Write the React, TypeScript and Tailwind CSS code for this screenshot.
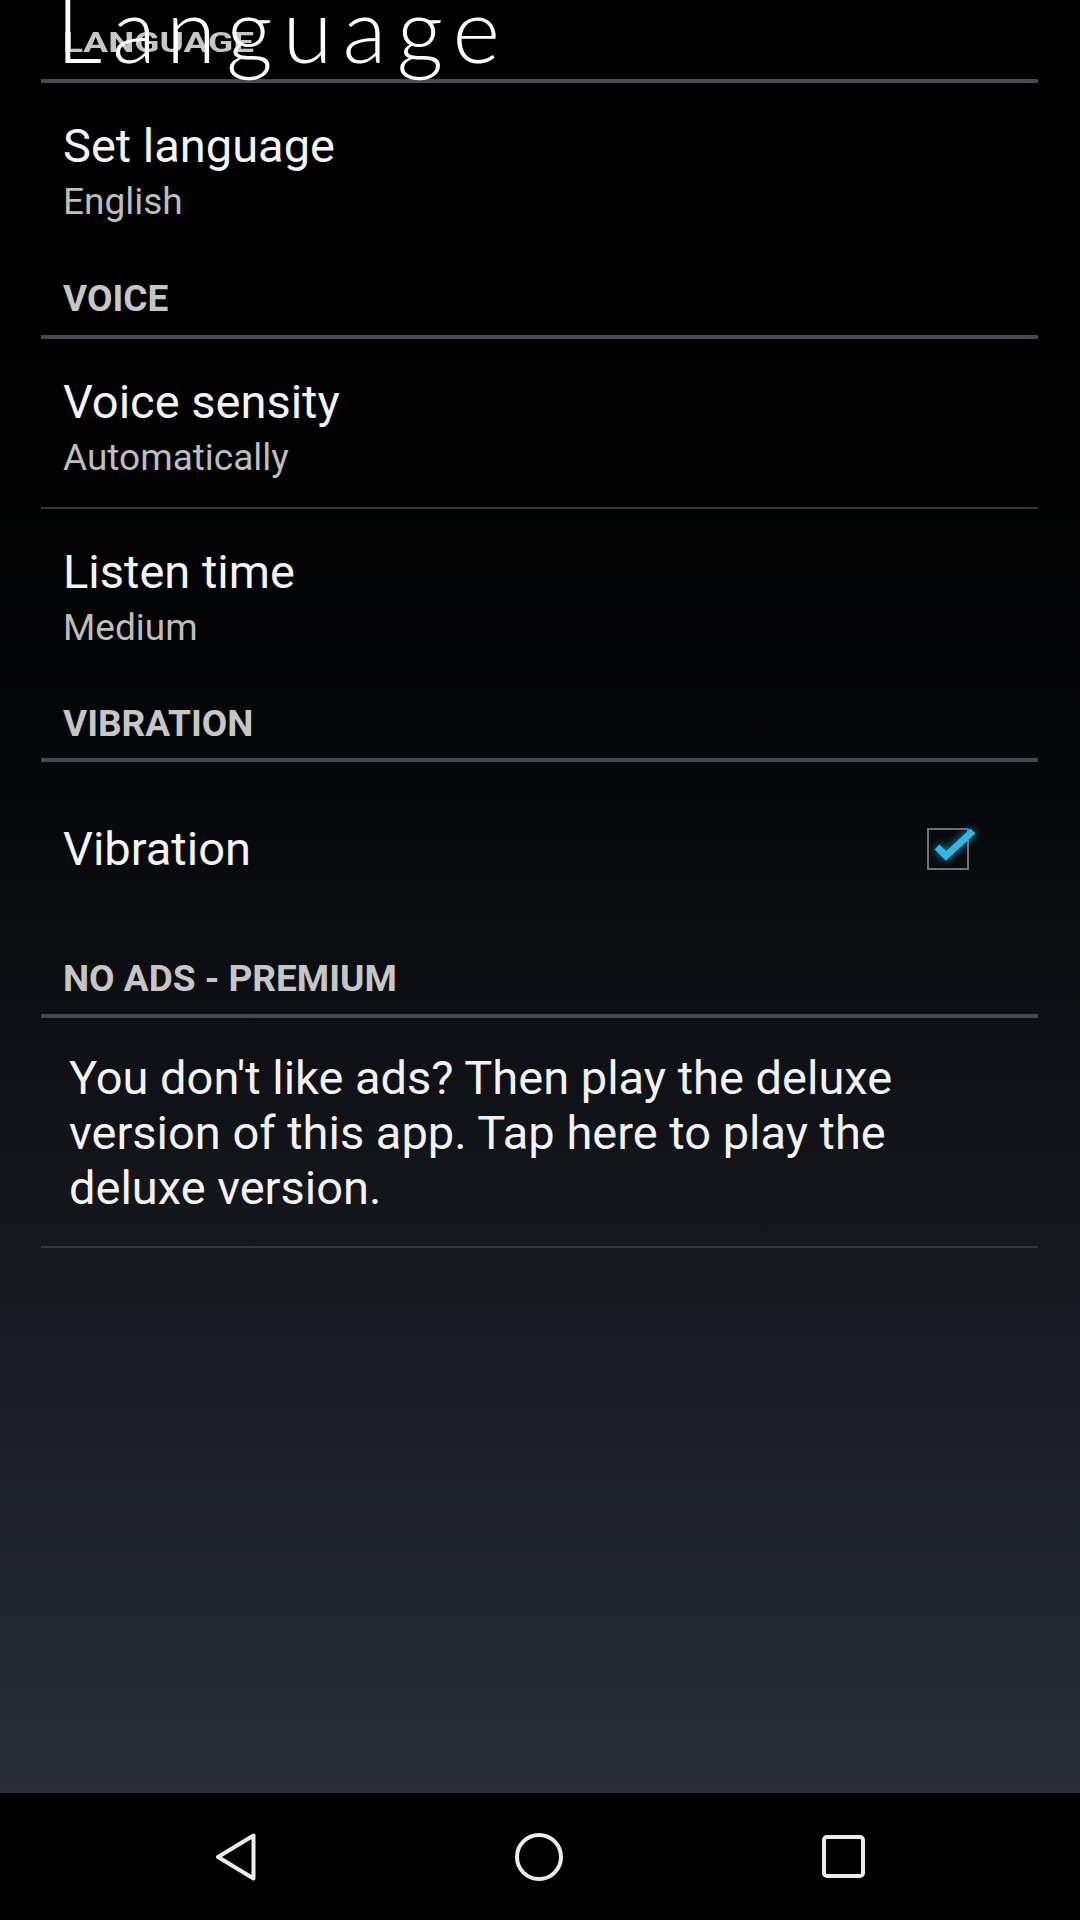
function SectionHeader({ label, pt, mt }: { label: string; pt: string; mt: string }) {
  return (
    <div className={pt}>
      <div className="pl-[63px] text-[37px] font-bold leading-[48px] text-[#c6c6c6]">{label}</div>
      <div className={`${mt} ml-[41px] mr-[42px] h-[4px] bg-[#46494d]`} />
    </div>
  );
}

function Pref({ title, summary }: { title: string; summary: string }) {
  return (
    <div className="pl-[63px] pt-[35px]">
      <div className="text-[47px] leading-[56px] text-[#f4f4f4]">{title}</div>
      <div className="text-[37px] leading-[56px] text-[#bdbdbd]">{summary}</div>
    </div>
  );
}

function Divider() {
  return <div className="ml-[41px] mr-[42px] h-[2px] bg-[#33363a]" />;
}

function CheckBox() {
  return (
    <div className="relative h-[42px] w-[42px] border-2 border-[#6e7073]">
      <svg
        viewBox="0 0 42 42"
        className="absolute left-[-2px] top-[-2px] h-[42px] w-[42px] overflow-visible drop-shadow-[0_0_4px_rgba(51,181,229,0.8)]"
      >
        <path d="M10 19 L19 28 L46 3" fill="none" stroke="#33b5e5" strokeWidth="7" strokeLinejoin="miter" />
      </svg>
    </div>
  );
}

function NavBar() {
  return (
    <div className="flex h-[127px] items-center justify-center gap-[259px] bg-black">
      <svg viewBox="0 0 41 48" className="h-[48px] w-[41px]">
        <path d="M38.5 2.5 L3 24 L38.5 45.5 Z" fill="none" stroke="#ececec" strokeWidth="4" strokeLinejoin="round" />
      </svg>
      <svg viewBox="0 0 48 48" className="h-[48px] w-[48px]">
        <circle cx="24" cy="24" r="22" fill="none" stroke="#ececec" strokeWidth="4" />
      </svg>
      <svg viewBox="0 0 43 43" className="h-[43px] w-[43px]">
        <rect x="2" y="2" width="39" height="39" rx="3" fill="none" stroke="#ececec" strokeWidth="4" />
      </svg>
    </div>
  );
}

export default function App() {
  return (
    <div className="flex h-[1920px] w-[1080px] flex-col overflow-hidden font-['Roboto',sans-serif]">
      <div className="relative flex-1 bg-linear-to-b from-black to-[#292d36]">
        <div className="h-[79px] pl-[63px] pt-[16px]">
          <div className="origin-[0_36px] scale-y-75 text-[37px] font-bold leading-[48px] text-[#c6c6c6]">LANGUAGE</div>
        </div>
        <div className="ml-[41px] mr-[42px] h-[4px] bg-[#46494d]" />
        <Pref title="Set language" summary="English" />

        <SectionHeader label="VOICE" pt="pt-[45px]" mt="mt-[12px]" />
        <div className="pb-[21px]">
          <Pref title="Voice sensity" summary="Automatically" />
        </div>
        <Divider />
        <Pref title="Listen time" summary="Medium" />

        <SectionHeader label="VIBRATION" pt="pt-[44px]" mt="mt-[10px]" />
        <div className="flex h-[174px] items-center justify-between pl-[63px] pr-[111px]">
          <div className="text-[47px] leading-[56px] text-[#f4f4f4]">Vibration</div>
          <CheckBox />
        </div>

        <SectionHeader label="NO ADS - PREMIUM" pt="pt-[19px]" mt="mt-[11px]" />
        <div className="pb-[31px] pl-[69px] pt-[32px]">
          <p className="w-[930px] text-[47px] leading-[55px] text-[#f2f2f2]">
            You don't like ads? Then play the deluxe version of this app. Tap here to play the deluxe version.
          </p>
        </div>
        <Divider />

        <div className="absolute left-[56px] top-[-18px] font-['Lato',sans-serif] text-[91px] font-light leading-none tracking-[10px] text-white">
          Language
        </div>
      </div>
      <NavBar />
    </div>
  );
}
